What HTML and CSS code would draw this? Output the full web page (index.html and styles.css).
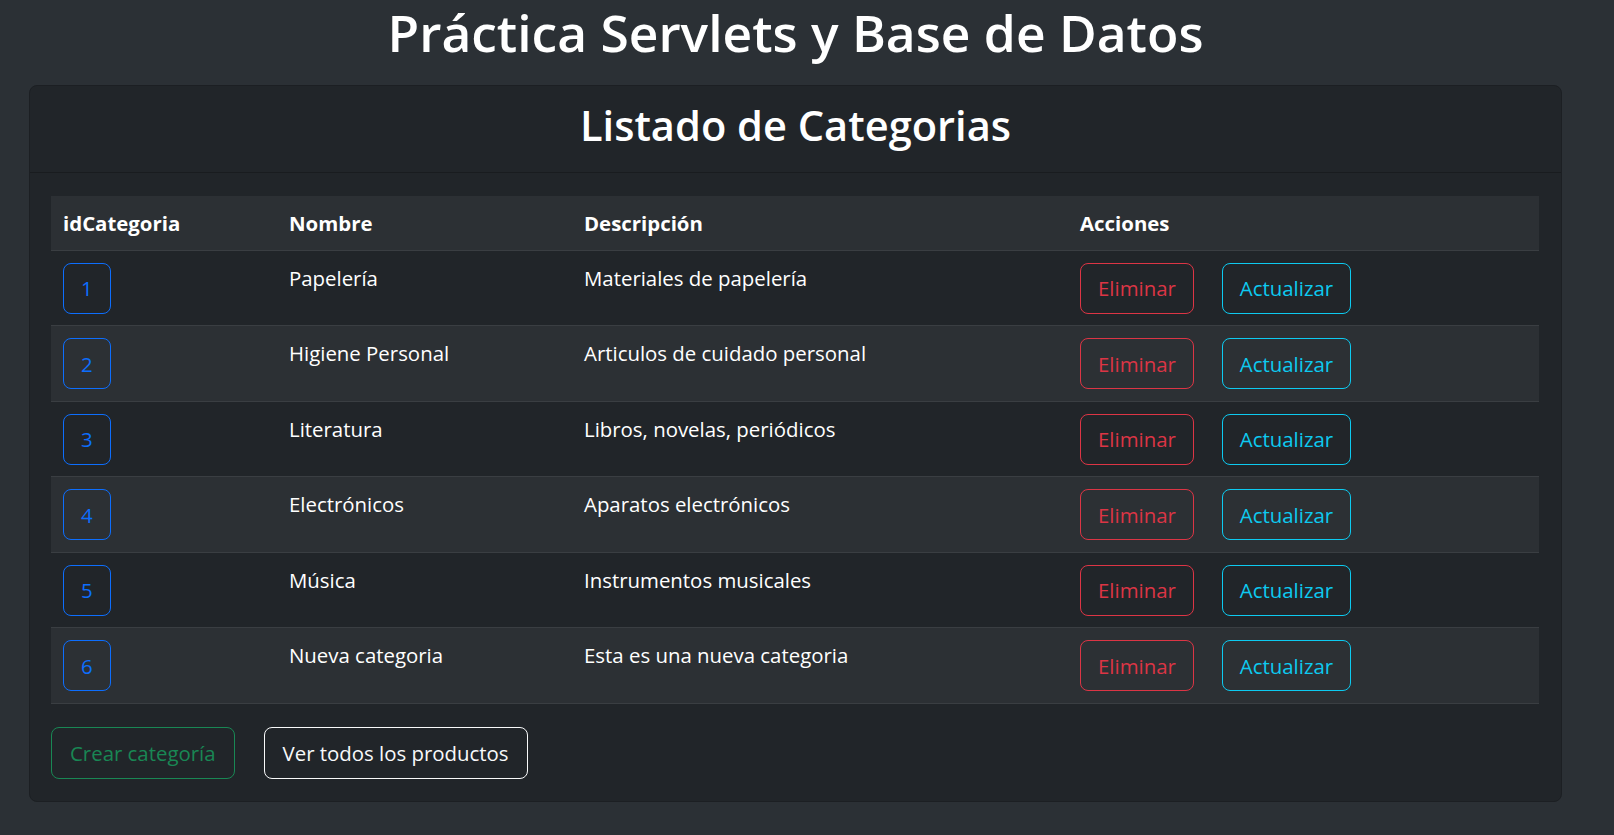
FILE: index.html
```html
<!DOCTYPE html>
<html lang="es">
<head>
<meta charset="utf-8">
<title>Práctica Servlets y Base de Datos</title>
<link rel="stylesheet" href="styles.css">
</head>
<body>
<div class="page">
<h1 class="title">Práctica Servlets y Base de Datos</h1>
<div class="card">
  <div class="card-header">
    <h2 class="card-title">Listado de Categorias</h2>
  </div>
  <div class="card-body">
    <table class="table">
      <colgroup>
        <col class="c-id"><col class="c-name"><col class="c-desc"><col class="c-act">
      </colgroup>
      <thead>
        <tr><th>idCategoria</th><th>Nombre</th><th>Descripción</th><th>Acciones</th></tr>
      </thead>
      <tbody>
        <tr>
          <td><a class="btn btn-primary">1</a></td>
          <td>Papelería</td>
          <td>Materiales de papelería</td>
          <td><div class="row-actions"><a class="btn btn-danger">Eliminar</a><a class="btn btn-info">Actualizar</a></div></td>
        </tr>
        <tr>
          <td><a class="btn btn-primary">2</a></td>
          <td>Higiene Personal</td>
          <td>Articulos de cuidado personal</td>
          <td><div class="row-actions"><a class="btn btn-danger">Eliminar</a><a class="btn btn-info">Actualizar</a></div></td>
        </tr>
        <tr>
          <td><a class="btn btn-primary">3</a></td>
          <td>Literatura</td>
          <td>Libros, novelas, periódicos</td>
          <td><div class="row-actions"><a class="btn btn-danger">Eliminar</a><a class="btn btn-info">Actualizar</a></div></td>
        </tr>
        <tr>
          <td><a class="btn btn-primary">4</a></td>
          <td>Electrónicos</td>
          <td>Aparatos electrónicos</td>
          <td><div class="row-actions"><a class="btn btn-danger">Eliminar</a><a class="btn btn-info">Actualizar</a></div></td>
        </tr>
        <tr>
          <td><a class="btn btn-primary">5</a></td>
          <td>Música</td>
          <td>Instrumentos musicales</td>
          <td><div class="row-actions"><a class="btn btn-danger">Eliminar</a><a class="btn btn-info">Actualizar</a></div></td>
        </tr>
        <tr>
          <td><a class="btn btn-primary">6</a></td>
          <td>Nueva categoria</td>
          <td>Esta es una nueva categoria</td>
          <td><div class="row-actions"><a class="btn btn-danger">Eliminar</a><a class="btn btn-info">Actualizar</a></div></td>
        </tr>
      </tbody>
    </table>
    <div class="footer-actions">
      <a class="btn btn-lg btn-success">Crear categoría</a>
      <a class="btn btn-lg btn-light">Ver todos los productos</a>
    </div>
  </div>
</div>
</div>
</body>
</html>
```
FILE: styles.css
```css
* { box-sizing: border-box; }

html, body {
  margin: 0;
  padding: 0;
}

body {
  background: #2b3035;
  color: #dee2e6;
  font-family: "Open Sans", "Noto Sans", sans-serif;
  font-size: 20.4px;
  line-height: 30px;
}

.page {
  width: 1591px;
}

.title {
  margin: 0;
  padding: 0 0 21px;
  text-align: center;
  color: #ffffff;
  font-size: 51.5px;
  font-weight: 600;
  line-height: 64px;
  letter-spacing: 0;
}

.card {
  margin: 0 29px;
  background: #212529;
  border: 1px solid #1c1f23;
  border-radius: 8px;
}

.card-header {
  border-bottom: 1px solid #191c1f;
  padding: 14px 20px 22px;
  text-align: center;
}

.card-title {
  margin: 0;
  color: #ffffff;
  font-size: 41.6px;
  font-weight: 600;
  line-height: 50px;
}

.card-body {
  padding: 23px 22px 22px 21px;
}

.table {
  width: 100%;
  border-collapse: collapse;
  table-layout: fixed;
  color: #ffffff;
}

.c-id { width: 226px; }
.c-name { width: 295px; }
.c-desc { width: 496px; }
.c-act { width: auto; }

.table th,
.table td {
  padding: 12px 12px 11.5px;
  text-align: left;
  vertical-align: top;
  border-bottom: 1px solid #3a3e42;
}

.table th {
  font-weight: 700;
  background: #2c3034;
}

.table tbody tr:nth-child(odd) td { background: #212529; }
.table tbody tr:nth-child(even) td { background: #2c3034; }

.row-actions {
  display: flex;
  gap: 28px;
}

.btn {
  display: inline-flex;
  align-items: center;
  justify-content: center;
  height: 51px;
  padding: 0 17px;
  border: 1px solid currentColor;
  border-radius: 8px;
  background: transparent;
  font-size: 20.4px;
  line-height: 30px;
  text-decoration: none;
  cursor: pointer;
}

.btn-lg { height: 52px; padding: 0 18px; }

.btn-primary { color: #0d6efd; }
.btn-danger { color: #dc3545; }
.btn-info { color: #0dcaf0; }
.btn-success { color: #198754; }
.btn-light { color: #f8f9fa; }

.footer-actions {
  display: flex;
  gap: 29px;
  margin-top: 23px;
}
```
